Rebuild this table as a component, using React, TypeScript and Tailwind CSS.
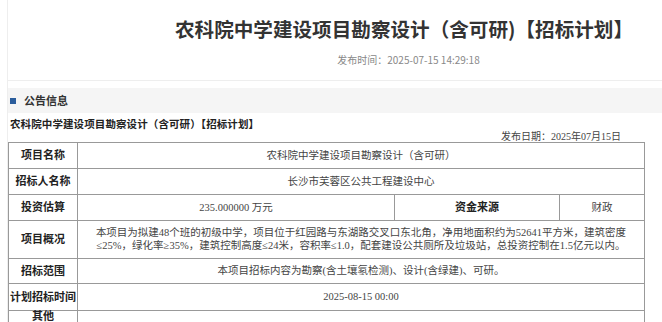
const serif = "font-['Liberation_Serif','Noto_Sans_CJK_SC',serif]";

const rows = [
  { label: "项目名称", value: "农科院中学建设项目勘察设计（含可研）", h: "h-[26px]" },
  { label: "招标人名称", value: "长沙市芙蓉区公共工程建设中心", h: "h-[26px]" },
];

export default function App() {
  return (
    <div className="w-[662px] h-[322px] overflow-hidden bg-white">
      <div className="ml-[7px] w-[796px] border-l border-[#eeeeee]">
        {/* header */}
        <header className="pt-[16px] pb-[13px] text-center border-b border-[#eeeeee] font-['Noto_Sans_CJK_SC',sans-serif]">
          <h1 className="text-[19.6px] leading-[26px] font-bold text-[#333333] pr-[3px]">
            农科院中学建设项目勘察设计（含可研)【招标计划】
          </h1>
          <p className="mt-[11px] text-[10px] leading-[14px] text-[#888888] pl-[6px]">
            发布时间：2025-07-15 14:29:18
          </p>
        </header>

        <div className="mt-[7px] h-[25px] bg-[#f5f5f5] flex items-center gap-[8px] pl-[2px] font-['Noto_Sans_CJK_SC',sans-serif]">
          <span className="w-[6px] h-[6px] bg-[#2b5d9c]" />
          <span className="text-[11px] font-bold text-[#333333]">公告信息</span>
        </div>

        <div className={`w-[636px] ${serif}`}>
          <h2 className="mt-[5px] pl-[2px] text-[10.5px] leading-[14px] font-bold tracking-[0.1px] text-[#222222]">
            农科院中学建设项目勘察设计（含可研）【招标计划】
          </h2>
          <p className="pr-[23px] text-right text-[10px] leading-[10px] text-[#444444]">
            发布日期：2025年07月15日
          </p>

          <table className="w-full table-fixed border-collapse text-[10.5px] text-[#444444]">
            <colgroup>
              <col className="w-[69px]" />
              <col className="w-[317px]" />
              <col className="w-[165px]" />
              <col className="w-[85px]" />
            </colgroup>
            <tbody>
              {rows.map((r) => (
                <tr key={r.label}>
                  <th className={`${r.h} border border-[#999999] font-bold text-[11px] text-[#222222]`}>{r.label}</th>
                  <td colSpan={3} className="border border-[#999999] text-center">{r.value}</td>
                </tr>
              ))}
              <tr>
                <th className="h-[26px] border border-[#999999] font-bold text-[11px] text-[#222222]">投资估算</th>
                <td className="border border-[#999999] text-center">235.000000 万元</td>
                <th className="border border-[#999999] font-bold text-[11px] text-[#222222]">资金来源</th>
                <td className="border border-[#999999] text-center">财政</td>
              </tr>
              <tr>
                <th className="h-[38px] border border-[#999999] font-bold text-[11px] text-[#222222]">项目概况</th>
                <td colSpan={3} className="border border-[#999999] text-center leading-[12.5px] px-[4px]">
                  本项目为拟建48个班的初级中学，项目位于红园路与东湖路交叉口东北角，净用地面积约为52641平方米，建筑密度≤25%，绿化率≥35%，建筑控制高度≤24米，容积率≤1.0，配套建设公共厕所及垃圾站，总投资控制在1.5亿元以内。
                </td>
              </tr>
              <tr>
                <th className="h-[25px] border border-[#999999] font-bold text-[11px] text-[#222222]">招标范围</th>
                <td colSpan={3} className="border border-[#999999] text-center">
                  本项目招标内容为勘察(含土壤氡检测)、设计(含绿建)、可研。
                </td>
              </tr>
              <tr>
                <th className="h-[27px] border border-[#999999] font-bold text-[11px] text-[#222222] whitespace-nowrap">计划招标时间</th>
                <td colSpan={3} className="border border-[#999999] text-center">2025-08-15 00:00</td>
              </tr>
              <tr>
                <th className="h-[26px] border border-[#999999] font-bold text-[11px] text-[#222222] align-top leading-[11px]">其他</th>
                <td colSpan={3} className="border border-[#999999]" />
              </tr>
            </tbody>
          </table>
        </div>
      </div>
    </div>
  );
}
